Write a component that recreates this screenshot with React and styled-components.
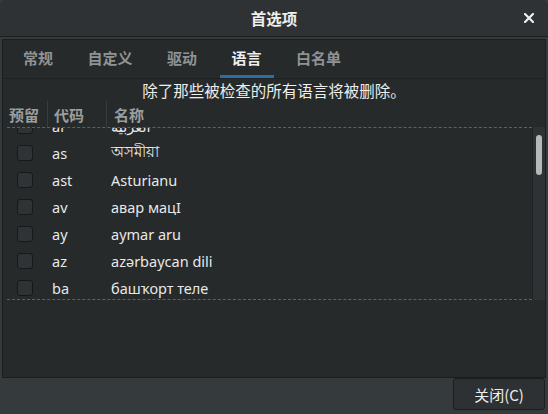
import React, { useLayoutEffect, useRef } from 'react'
import styled, { createGlobalStyle } from 'styled-components'

const GlobalStyle = createGlobalStyle`
  html, body {
    margin: 0;
    padding: 0;
    background: #353b3c;
  }
  body {
    font-family: "Noto Sans", "Noto Sans CJK SC", "DejaVu Sans", sans-serif;
    color: #eeeeec;
  }
`

const tabs = ['常规', '自定义', '驱动', '语言', '白名单']

const languages = [
  { code: 'ar', name: 'العربية' },
  { code: 'as', name: 'অসমীয়া' },
  { code: 'ast', name: 'Asturianu' },
  { code: 'av', name: 'авар мацӀ' },
  { code: 'ay', name: 'aymar aru' },
  { code: 'az', name: 'azərbaycan dili' },
  { code: 'ba', name: 'башҡорт теле' },
  { code: 'be', name: 'беларуская' },
  { code: 'bg', name: 'български' },
]

function App() {
  const listRef = useRef(null)

  useLayoutEffect(() => {
    if (listRef.current) listRef.current.scrollTop = 16
  }, [])

  return (
    <>
      <GlobalStyle />
      <Window>
        <TitleBar>
          <span />
          <Title>首选项</Title>
          <CloseButton aria-label="close">
            <svg width="10" height="10" viewBox="0 0 10 10">
              <path d="M1 1 L9 9 M9 1 L1 9" stroke="#eeeeec" strokeWidth="2.2" strokeLinecap="square" />
            </svg>
          </CloseButton>
        </TitleBar>

        <Body>
          <Frame>
            <TabBar>
              {tabs.map((t) => (
                <Tab key={t} active={t === '语言'}>{t}</Tab>
              ))}
            </TabBar>

            <Notice>除了那些被检查的所有语言将被删除。</Notice>

            <HeaderRow>
              <HeaderCell>预留</HeaderCell>
              <HeaderCell divider>代码</HeaderCell>
              <HeaderCell divider wide>名称</HeaderCell>
            </HeaderRow>

            <ListArea>
              <Viewport ref={listRef}>
                {languages.map((l) => (
                  <Row key={l.code}>
                    <CheckCell>
                      <Checkbox />
                    </CheckCell>
                    <CodeCell>{l.code}</CodeCell>
                    <NameCell>{l.name}</NameCell>
                  </Row>
                ))}
              </Viewport>
              <Scrollbar>
                <Slider />
              </Scrollbar>
            </ListArea>
          </Frame>
        </Body>

        <Footer>
          <Button>关闭(C)</Button>
        </Footer>
      </Window>
    </>
  )
}

const Window = styled.div`
  width: 548px;
  height: 414px;
  display: flex;
  flex-direction: column;
  background: #353b3c;
  overflow: hidden;
`

const TitleBar = styled.div`
  height: 36px;
  flex: none;
  display: grid;
  grid-template-columns: 1fr auto 1fr;
  align-items: center;
  background: #2e3234;
  border-bottom: 1px solid #1b1e1f;
  border-radius: 6px 6px 0 0;
`

const Title = styled.div`
  font-family: "Noto Sans CJK SC", sans-serif;
  font-size: 15.5px;
  font-weight: 700;
  color: #eeeeec;
`

const CloseButton = styled.div`
  justify-self: end;
  width: 10px;
  height: 10px;
  margin-right: 14px;
  display: flex;
`

const Body = styled.div`
  flex: 1;
  display: flex;
  padding: 2px 2px 0 2px;
`

const Frame = styled.div`
  flex: 1;
  display: flex;
  flex-direction: column;
  background: #262a2b;
  border: 1px solid #1b1e1f;
`

const TabBar = styled.div`
  height: 38px;
  flex: none;
  display: flex;
  gap: 10.5px;
  padding-left: 8px;
  border-bottom: 1px solid #1f2223;
`

const Tab = styled.div`
  display: flex;
  align-items: center;
  padding: 0 12px 4px;
  font-family: "Noto Sans CJK SC", sans-serif;
  font-size: 15px;
  font-weight: 700;
  color: ${(p) => (p.active ? '#eeeeec' : '#8f9394')};
  box-shadow: ${(p) => (p.active ? 'inset 0 -3px 0 #2e6da4' : 'none')};
`

const Notice = styled.div`
  height: 22px;
  line-height: 22px;
  text-align: center;
  font-family: "Noto Sans CJK SC", sans-serif;
  font-size: 15.5px;
  color: #eeeeec;
`

const HeaderRow = styled.div`
  height: 26px;
  flex: none;
  display: grid;
  grid-template-columns: 44px 59px 1fr;
  align-items: center;
`

const HeaderCell = styled.div`
  height: 100%;
  display: flex;
  align-items: center;
  padding-left: ${(p) => (p.wide ? '7px' : '6px')};
  border-left: ${(p) => (p.divider ? '1px solid #383c3e' : 'none')};
  font-family: "Noto Sans CJK SC", sans-serif;
  font-size: 15px;
  font-weight: 700;
  color: #9a9e9f;
`

const ListArea = styled.div`
  display: flex;
  height: 173px;
  flex: none;
`

const Viewport = styled.div`
  flex: 1;
  margin-left: 4px;
  overflow: hidden;
  border-top: 1px dashed #5c6264;
  border-bottom: 1px dashed #5c6264;
`

const Row = styled.div`
  height: 27px;
  display: grid;
  grid-template-columns: 40px 59px 1fr;
  align-items: center;
  font-size: 14.5px;
  color: #e8e8e7;
`

const CheckCell = styled.div`
  padding-left: 10px;
  display: flex;
`

const Checkbox = styled.div`
  width: 14px;
  height: 14px;
  border: 1px solid #161819;
  border-radius: 3px;
  background: #2f3335;
`

const CodeCell = styled.div`
  padding-left: 5px;
`

const NameCell = styled.div`
  padding-left: 5px;
  white-space: nowrap;
`

const Scrollbar = styled.div`
  width: 12px;
  flex: none;
  background: #2e3234;
  border-left: 1px solid #1f2223;
  display: flex;
  justify-content: center;
`

const Slider = styled.div`
  width: 6px;
  height: 40px;
  margin-top: 8px;
  border-radius: 3px;
  background: #b4b8b9;
`

const Footer = styled.div`
  height: 36px;
  flex: none;
  display: flex;
  justify-content: flex-end;
  align-items: flex-start;
  padding-right: 3px;
`

const Button = styled.div`
  width: 90px;
  height: 30px;
  display: flex;
  align-items: center;
  justify-content: center;
  background: #2d3133;
  border: 1px solid #1b1e1f;
  border-radius: 3px;
  font-family: "Noto Sans CJK SC", sans-serif;
  font-size: 15px;
  color: #eeeeec;
`

export default App
